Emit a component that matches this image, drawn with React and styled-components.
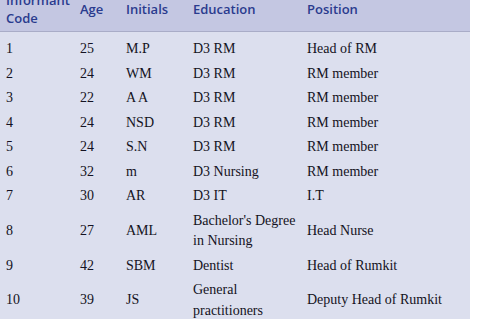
import React from "react";
import styled, { createGlobalStyle } from "styled-components";

const Global = createGlobalStyle`
  html, body {
    margin: 0;
    padding: 0;
    background: #ffffff;
    overflow: hidden;
  }
`;

const Page = styled.div`
  width: 480px;
  height: 319px;
  overflow: hidden;
`;

const Table = styled.table`
  width: 470px;
  margin-top: -14px;
  border-collapse: collapse;
  table-layout: fixed;
  background: #dcdfee;
`;

const Head = styled.thead`
  background: #c4c7e2;
  border-bottom: 1px solid #a9acc7;
`;

const HeadCell = styled.th`
  box-sizing: border-box;
  padding: 5px 0 4px 6px;
  text-align: left;
  vertical-align: middle;
  font-family: "Open Sans", "Liberation Sans", sans-serif;
  font-size: 13px;
  font-weight: 600;
  line-height: 18px;
  color: #2a3b8e;
  width: ${({ $w }) => $w}px;
`;

const Row = styled.tr`
  &:first-child td {
    padding-top: 7px;
  }
`;

const Cell = styled.td`
  padding: 2px 0 2px 6px;
  vertical-align: middle;
  font-family: "Liberation Serif", "Times New Roman", serif;
  font-size: 14px;
  line-height: 20.5px;
  color: #141222;
`;

const columns = [
  { label: "Informant\nCode", w: 74 },
  { label: "Age", w: 46 },
  { label: "Initials", w: 67 },
  { label: "Education", w: 114 },
  { label: "Position", w: 169 },
];

const rows = [
  ["1", "25", "M.P", "D3 RM", "Head of RM"],
  ["2", "24", "WM", "D3 RM", "RM member"],
  ["3", "22", "A A", "D3 RM", "RM member"],
  ["4", "24", "NSD", "D3 RM", "RM member"],
  ["5", "24", "S.N", "D3 RM", "RM member"],
  ["6", "32", "m", "D3 Nursing", "RM member"],
  ["7", "30", "AR", "D3 IT", "I.T"],
  ["8", "27", "AML", "Bachelor's Degree\nin Nursing", "Head Nurse"],
  ["9", "42", "SBM", "Dentist", "Head of Rumkit"],
  ["10", "39", "JS", "General\npractitioners", "Deputy Head of Rumkit"],
];

const lines = (text) =>
  text.split("\n").map((t, i) => (
    <React.Fragment key={i}>
      {i > 0 && <br />}
      {t}
    </React.Fragment>
  ));

export default function App() {
  return (
    <Page>
      <Global />
      <Table>
        <Head>
          <tr>
            {columns.map((c) => (
              <HeadCell key={c.label} $w={c.w}>
                {lines(c.label)}
              </HeadCell>
            ))}
          </tr>
        </Head>
        <tbody>
          {rows.map((r) => (
            <Row key={r[0]}>
              {r.map((v, i) => (
                <Cell key={i}>{lines(v)}</Cell>
              ))}
            </Row>
          ))}
        </tbody>
      </Table>
    </Page>
  );
}
